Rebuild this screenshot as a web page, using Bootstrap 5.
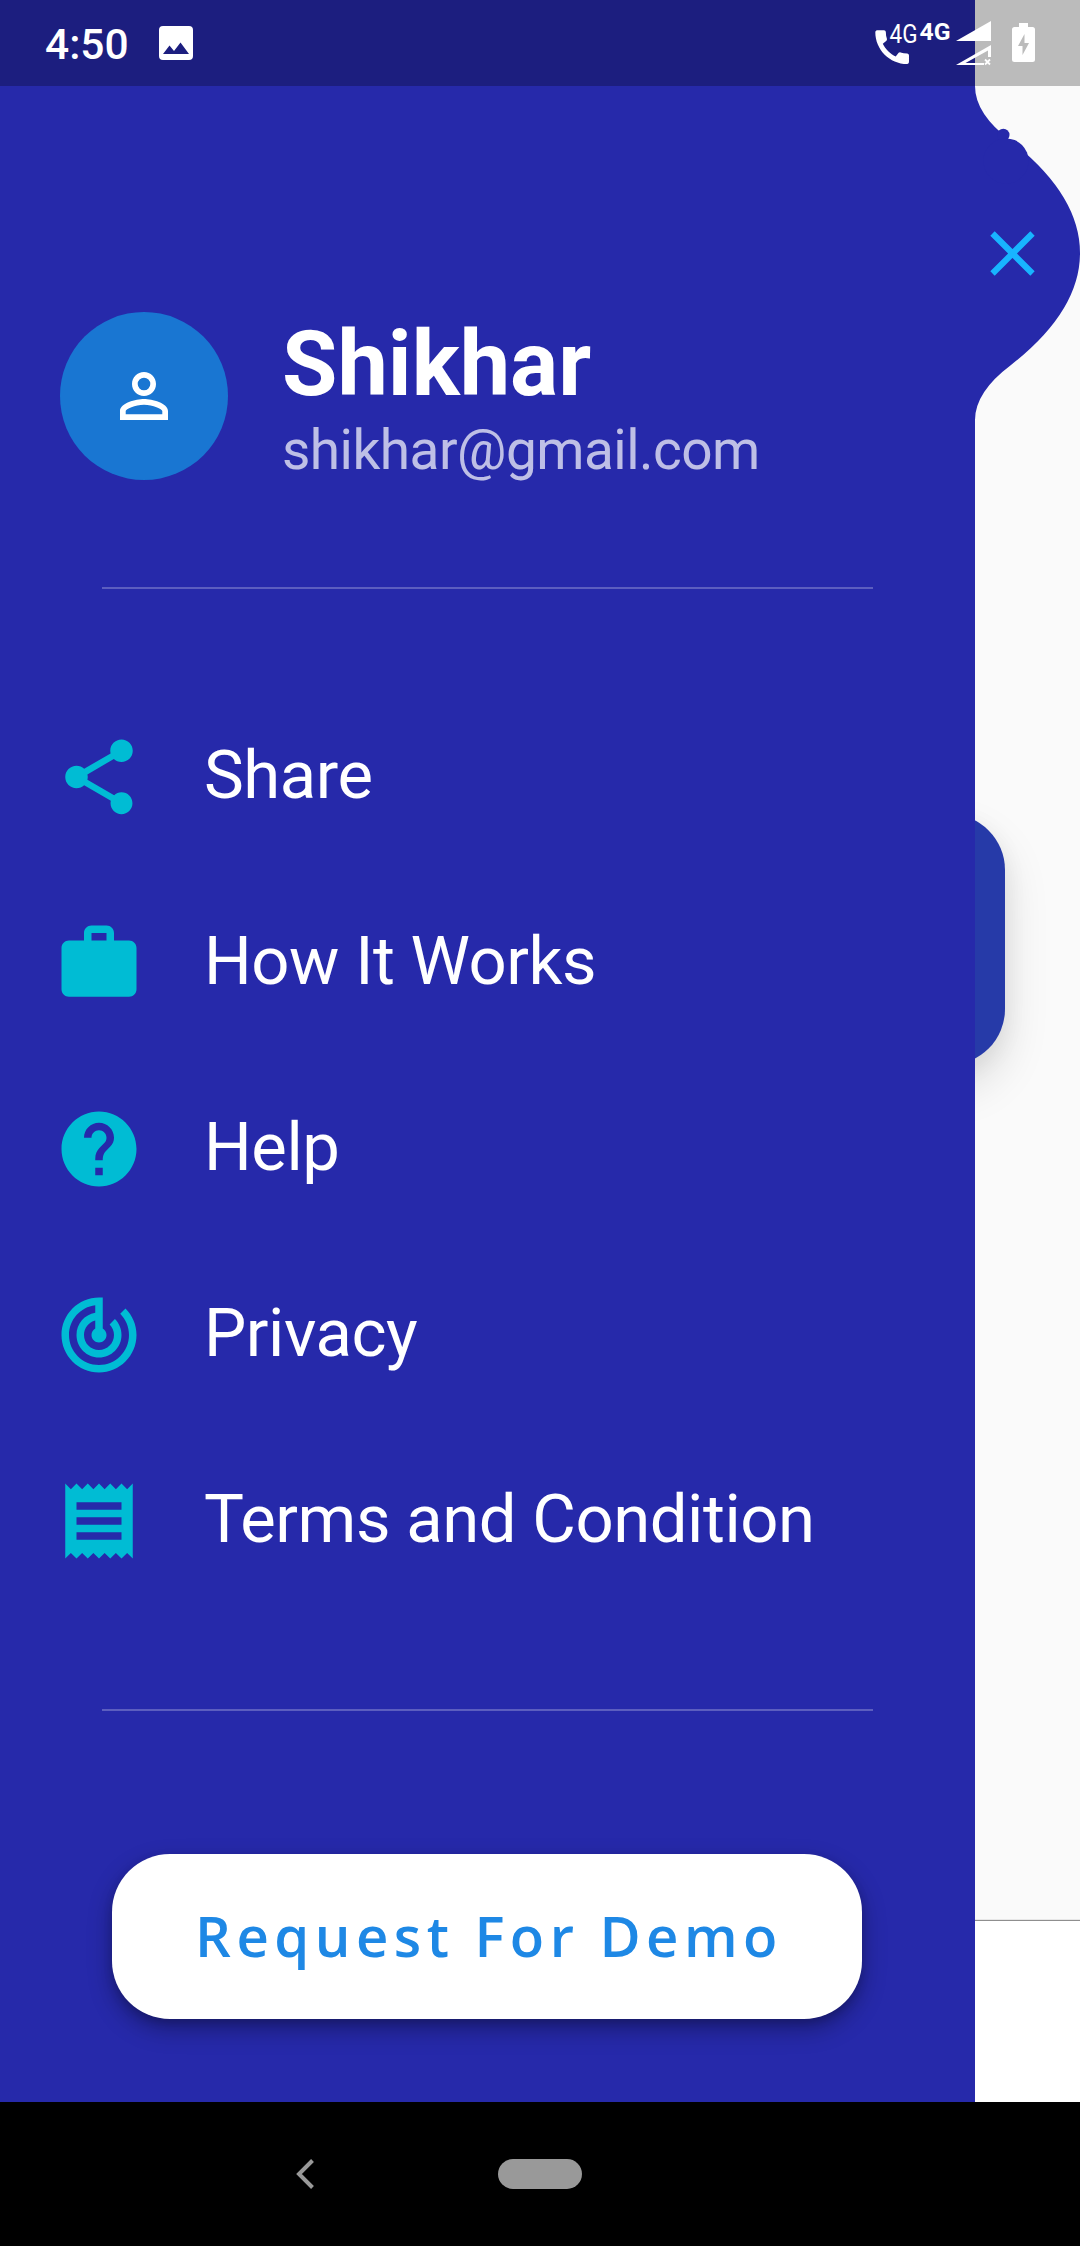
<!DOCTYPE html>
<html lang="en">
<head>
<meta charset="utf-8">
<meta name="viewport" content="width=device-width, initial-scale=1">
<title>Menu</title>
<link href="https://cdn.jsdelivr.net/npm/bootstrap@5.3.0/dist/css/bootstrap.min.css" rel="stylesheet">
<style>
  body { font-family: Roboto, "Liberation Sans", sans-serif; background: #fafafa; }
  .screen { width: 1080px; height: 2246px; }
  .stage { height: 2102px; }
  .drawer { width: 975px; background: #2629aa; color: #fff; padding-top: 312px; z-index: 1; }
  .page-peek { background: #fafafa; width: 105px; z-index: 0; }
  .peek-card { width: 300px; height: 251px; margin-top: 814px; margin-left: -270px; border-radius: 56px; background: #263aa8; box-shadow: 0 22px 45px rgba(0,0,0,.13), 0 6px 24px rgba(0,0,0,.06); }
  .peek-bar { height: 181px; background: #fff; box-shadow: 0 -1px 1px #8f8f8f; }
  .handle { left: 975px; top: 86px; z-index: 2; }
  .status { height: 86px; background: rgba(0,0,0,.25); z-index: 3; color: #fff; padding-left: 45px; }
  .clock { font-size: 42.500px; font-weight: 500; line-height: 89px; width: 105px; }
  .profile { height: 168px; padding-left: 60px; gap: 54px; }
  .avatar { width: 168px; height: 168px; background: #1976d2; }
  .user-name { font-size: 90px; font-weight: 700; line-height: 105px; padding-top: 2px; }
  .user-mail { font-size: 55px; letter-spacing: -.53px; line-height: 66px; color: rgba(255,255,255,.7); }
  .rule { width: 771px; height: 2px; background: rgba(255,255,255,.25); }
  .rule-top { margin-top: 107px; }
  .menu { margin-top: 95px; margin-bottom: 95px; }
  .entry { height: 186px; padding: 0 0 0 54px; gap: 60px; font-size: 67px; letter-spacing: -.45px; line-height: 80px; color: #fff; }
  .entry span { padding-bottom: 4px; }
  .entry svg { fill: #00bcd4; }
  .demo-btn { width: 750px; height: 165px; margin-top: 143px; margin-left: 112px; border-radius: 58px; background: #fff; color: #1e88e5; font-family: "Open Sans", sans-serif; font-size: 56.25px; font-weight: 600; letter-spacing: 5.45px; padding: 0 0 3px 4px; box-shadow: 0 10px 24px rgba(0,0,0,.32), 0 4px 8px rgba(0,0,0,.15); }
  .sysnav { height: 144px; background: #000; }
</style>
</head>
<body>
<div class="screen position-relative overflow-hidden">
  <div class="stage d-flex position-relative">
    <aside class="drawer d-flex flex-column position-relative flex-shrink-0">
      <header class="profile d-flex align-items-center">
        <div class="avatar rounded-circle d-flex align-items-center justify-content-center flex-shrink-0">
          <svg width="72" height="72" viewBox="0 0 24 24" fill="#fff"><path d="M12 5.9a2.1 2.1 0 1 1 0 4.2 2.1 2.1 0 0 1 0-4.2m0 9c2.970 0 6.100 1.460 6.100 2.100v1.100H5.900V17c0-.64 3.130-2.100 6.100-2.100M12 4C9.790 4 8 5.790 8 8s1.790 4 4 4 4-1.790 4-4-1.790-4-4-4zm0 9c-2.670 0-8 1.340-8 4v3h16v-3c0-2.660-5.330-4-8-4z"/></svg>
        </div>
        <div>
          <div class="user-name">Shikhar</div>
          <div class="user-mail">shikhar@gmail.com</div>
        </div>
      </header>
      <div class="rule rule-top mx-auto"></div>
      <nav class="menu nav flex-column">
        <a class="entry nav-link d-flex align-items-center" href="#"><svg width="90" height="90" viewBox="0 0 24 24"><path d="M18 16.080c-.76 0-1.440.3-1.960.77L8.910 12.700c.05-.23.09-.46.09-.7s-.04-.47-.09-.7l7.050-4.110c.54.5 1.250.81 2.040.81 1.660 0 3-1.340 3-3s-1.340-3-3-3-3 1.340-3 3c0 .24.04.47.09.7L8.040 9.810C7.500 9.310 6.790 9 6 9c-1.660 0-3 1.340-3 3s1.340 3 3 3c.79 0 1.500-.31 2.040-.81l7.120 4.160c-.05.21-.08.43-.08.65 0 1.610 1.310 2.920 2.920 2.920s2.920-1.310 2.920-2.920-1.310-2.920-2.920-2.920z"/></svg><span>Share</span></a>
        <a class="entry nav-link d-flex align-items-center" href="#"><svg width="90" height="90" viewBox="0 0 24 24"><path d="M20 6h-4V4c0-1.110-.89-2-2-2h-4c-1.110 0-2 .89-2 2v2H4c-1.110 0-2 .89-2 2v11c0 1.110.89 2 2 2h16c1.110 0 2-.89 2-2V8c0-1.110-.89-2-2-2zm-6 0h-4V4h4v2z"/></svg><span>How It Works</span></a>
        <a class="entry nav-link d-flex align-items-center" href="#"><svg width="90" height="90" viewBox="0 0 24 24"><path d="M12 2C6.480 2 2 6.480 2 12s4.480 10 10 10 10-4.480 10-10S17.520 2 12 2zm1 17h-2v-2h2v2zm2.070-7.750-.9.92C13.450 12.900 13 13.500 13 15h-2v-.5c0-1.100.45-2.100 1.170-2.830l1.240-1.260c.37-.36.59-.86.59-1.410 0-1.100-.9-2-2-2s-2 .9-2 2H8c0-2.210 1.790-4 4-4s4 1.790 4 4c0 .88-.36 1.680-.93 2.250z"/></svg><span>Help</span></a>
        <a class="entry nav-link d-flex align-items-center" href="#"><svg width="90" height="90" viewBox="0 0 24 24"><path d="M19.070 4.930l-1.410 1.410C19.100 7.790 20 9.790 20 12c0 4.420-3.580 8-8 8s-8-3.580-8-8c0-4.080 3.050-7.440 7-7.930v2.020C8.160 6.570 6 9.030 6 12c0 3.310 2.690 6 6 6s6-2.690 6-6c0-1.660-.67-3.160-1.760-4.240l-1.410 1.410C15.550 9.900 16 10.900 16 12c0 2.210-1.790 4-4 4s-4-1.790-4-4c0-1.860 1.280-3.410 3-3.860v2.140c-.6.35-1 .98-1 1.720 0 1.100.9 2 2 2s2-.9 2-2c0-.74-.4-1.380-1-1.720V2h-1C6.480 2 2 6.480 2 12s4.480 10 10 10 10-4.480 10-10c0-2.760-1.120-5.260-2.930-7.070z"/></svg><span>Privacy</span></a>
        <a class="entry nav-link d-flex align-items-center" href="#"><svg width="90" height="90" viewBox="0 0 24 24"><path d="M18 17H6v-2h12v2zm0-4H6v-2h12v2zm0-4H6V7h12v2zM3 22l1.500-1.500L6 22l1.500-1.500L9 22l1.500-1.500L12 22l1.500-1.500L15 22l1.500-1.500L18 22l1.500-1.500L21 22V2l-1.500 1.500L18 2l-1.500 1.500L15 2l-1.500 1.500L12 2l-1.500 1.500L9 2 7.500 3.500 6 2 4.500 3.500 3 2v20z"/></svg><span>Terms and Condition</span></a>
      </nav>
      <div class="rule mx-auto"></div>
      <button class="demo-btn btn border-0" type="button">Request For Demo</button>
    </aside>
    <main class="page-peek d-flex flex-column justify-content-between position-relative">
      <div class="peek-card"></div>
      <div class="peek-bar"></div>
    </main>
    <svg class="handle position-absolute" width="105" height="334" viewBox="975 86 105 334">
      <path fill="#2629aa" d="M975 86Q975 114 1011 141Q1080 195 1080 253Q1080 311 1011 365Q975 392 975 420z"/>
      <circle cx="1003.300" cy="135" r="6.200" fill="#2629aa"/><circle cx="1006" cy="161" r="22.600" fill="#2629aa"/>
      <path d="M992.500 233.500l40 40m0-40l-40 40" stroke="#18b4ff" stroke-width="6.200"/>
    </svg>
  </div>
  <div class="status position-absolute top-0 start-0 w-100 d-flex">
    <span class="clock">4:50</span>
    <svg width="930" height="86" viewBox="150 0 930 86" fill="#fff">
      <path fill-rule="evenodd" d="M163 26h26a4 4 0 0 1 4 4v26a4 4 0 0 1-4 4h-26a4 4 0 0 1-4-4V30a4 4 0 0 1 4-4zM163 54h26l-8.500-11.500-6.500 8.500-4.500-5.500z"/>
      <path transform="translate(869.700 24.700) scale(1.870)" d="M20.010 15.380c-1.230 0-2.420-.2-3.530-.56-.35-.12-.74-.03-1.010.24l-1.570 1.970c-2.830-1.350-5.480-3.900-6.890-6.830l1.950-1.660c.27-.28.35-.67.24-1.020-.37-1.110-.56-2.300-.56-3.530 0-.54-.45-.99-.99-.99H4.190C3.650 3 3 3.240 3 3.990 3 13.280 10.730 21 20.010 21c.71 0 .99-.63.99-1.180v-3.450c0-.54-.45-.99-.99-.99z"/>
      <text x="889.500" y="43" font-size="25.500" textLength="28" lengthAdjust="spacingAndGlyphs">4G</text>
      <text x="919.500" y="39.500" font-size="24.500" font-weight="700" textLength="31" lengthAdjust="spacingAndGlyphs">4G</text>
      <path d="M956 41l35-20v20z"/>
      <path fill-rule="evenodd" d="M956 65l35-20v12h-3v-6.500L965.500 63h18.500v2z"/>
      <path d="M985 59.500l5 5m0-5l-5 5" stroke="#fff" stroke-width="1.800"/>
      <path fill-rule="evenodd" d="M1019 23h9v4h4.500a2.500 2.500 0 0 1 2.500 2.500v30a2.500 2.500 0 0 1-2.500 2.500h-18a2.500 2.500 0 0 1-2.500-2.500v-30a2.500 2.500 0 0 1 2.500-2.500h4.500zM1024.500 34l-6.500 12h4.500v9l6.500-12h-4.500z"/>
    </svg>
  </div>
  <footer class="sysnav">
    <svg width="1080" height="144" viewBox="0 2102 1080 144"><path d="M312.500 2160.500l-13.500 13.500 13.500 13.500" fill="none" stroke="#999" stroke-width="4"/><rect x="498" y="2159" width="84" height="30" rx="15" fill="#999"/></svg>
  </footer>
</div>
<script src="https://cdn.jsdelivr.net/npm/bootstrap@5.3.0/dist/js/bootstrap.bundle.min.js"></script>
</body>
</html>
